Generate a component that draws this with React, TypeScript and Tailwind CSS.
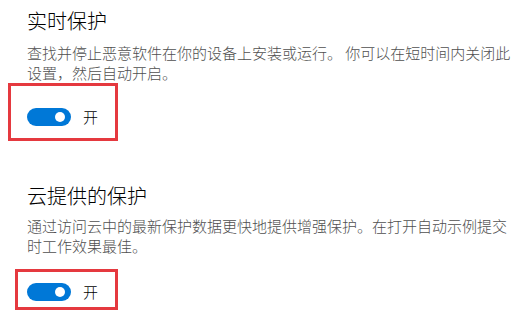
import React from "react";

const font = {
  fontFamily: '"Noto Sans CJK SC", "Noto Sans", sans-serif',
};

function Toggle() {
  return (
    <div className="flex items-center gap-[12px]">
      <div className="flex h-[18px] w-[44px] items-center justify-end rounded-full bg-[#0078d7] pr-[6px]">
        <div className="size-[10px] rounded-full bg-white" />
      </div>
      <span className="text-[15px] leading-[18px] font-light text-black">开</span>
    </div>
  );
}

export default function App() {
  return (
    <div className="h-[315px] w-[521px] overflow-hidden bg-white" style={font}>
      <div className="pl-[27px] pt-[7px]">
        <h2 className="text-[20px] leading-[28px] font-light text-black">实时保护</h2>
        <p className="mt-[8px] w-[488px] text-[15px] leading-[20px] font-light text-[#4f4f4f]">
          查找并停止恶意软件在你的设备上安装或运行。 你可以在短时间内关闭此设置，然后自动开启。
        </p>
      </div>

      {/* highlight box */}
      <div className="ml-[8px] h-[58px] w-[110px] border-[3px] border-[#e5393f] pl-[16px] pt-[22px]">
        <Toggle />
      </div>

      <div className="mt-[41px] pl-[27px]">
        <h2 className="text-[20px] leading-[28px] font-light text-black">云提供的保护</h2>
        <p className="mt-[6px] w-[488px] text-[15px] leading-[20px] font-light text-[#4f4f4f]">
          通过访问云中的最新保护数据更快地提供增强保护。在打开自动示例提交时工作效果最佳。
        </p>
      </div>

      <div className="ml-[15px] mt-[13px] h-[41px] w-[103px] border-[3px] border-[#e5393f] pl-[9px] pt-[11px]">
        <Toggle />
      </div>
    </div>
  );
}
